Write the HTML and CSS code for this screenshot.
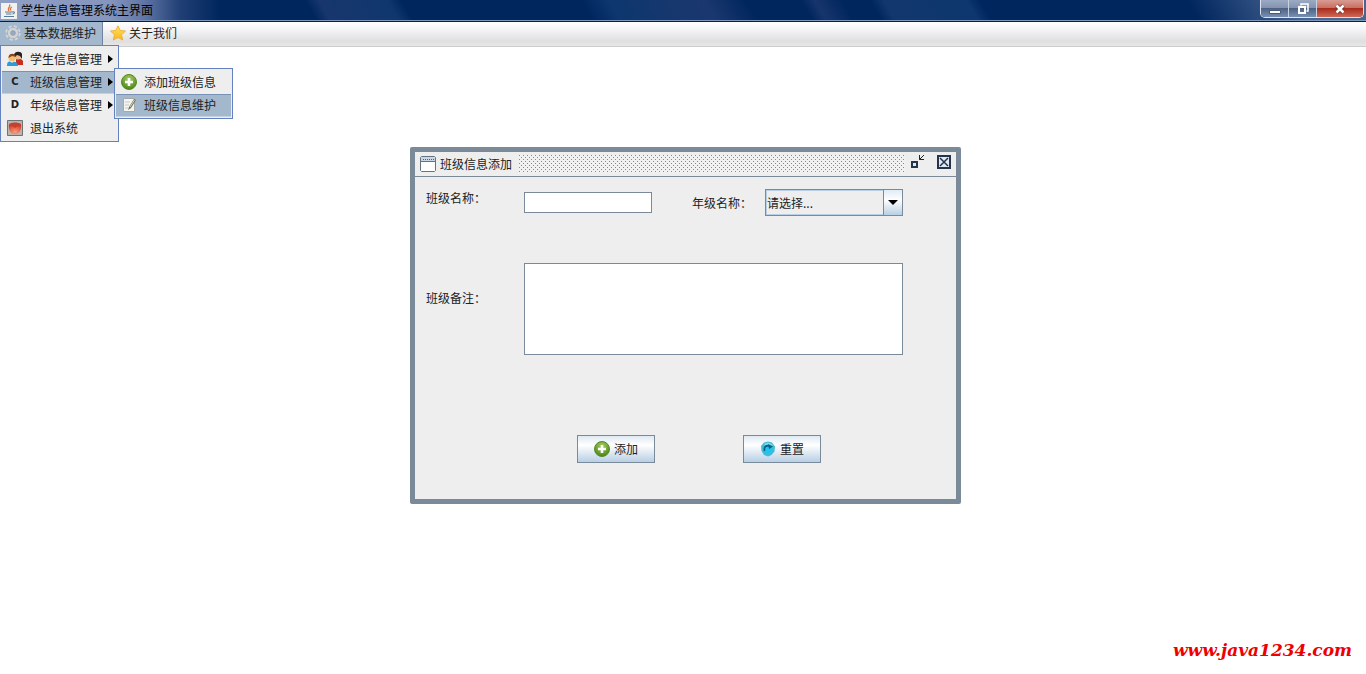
FILE: index.html
```html
<!DOCTYPE html>
<html lang="zh-CN">
<head>
<meta charset="utf-8">
<title>学生信息管理系统主界面</title>
<link rel="stylesheet" href="styles.css">
</head>
<body>
<svg class="defs" aria-hidden="true">
  <defs>
    <radialGradient id="green" cx="50%" cy="30%" r="70%"><stop offset="0" stop-color="#a5ce62"/><stop offset="1" stop-color="#4b8518"/></radialGradient>
    <linearGradient id="star" x1="0" y1="0" x2="0" y2="1"><stop offset="0" stop-color="#ffe65c"/><stop offset="1" stop-color="#f9b51c"/></linearGradient>
    <radialGradient id="red" cx="50%" cy="80%" r="80%"><stop offset="0" stop-color="#ff9a7c"/><stop offset="1" stop-color="#c93a24"/></radialGradient>
    <symbol id="add" viewBox="0 0 16 16"><circle cx="8" cy="8" r="7.5" fill="url(#green)" stroke="#568b25"/><path d="M8 4v8M4 8h8" stroke="#fff" stroke-width="2.6"/></symbol>
  </defs>
</svg>

<header class="titlebar">
  <svg class="java" viewBox="0 0 16 16"><path d="M0 0h16v16H0z" fill="#f3f1ec"/><path d="M8.5 1.5c2 2-3 3.500-.5 6.500M11 4c-2 1-2 2-1 3.500" fill="none" stroke="#e2703a" stroke-width="1.300"/><path d="M4 9h7.500M5 11h5.500M3 13.500h10M11.500 9c3-1 2 2 0 2" fill="none" stroke="#567a9d" stroke-width="1.100"/></svg>
  <h1 class="app-title">学生信息管理系统主界面</h1>
  <div class="controls">
    <button class="control" aria-label="最小化"><svg class="control-icon" viewBox="0 0 14 14"><path d="M1.500 8.500h11v3h-11z" fill="#fff" stroke="#4c5b75"/></svg></button>
    <button class="control" aria-label="还原"><svg class="control-icon" viewBox="0 0 14 14"><path d="M5 3.500V2h7v7h-1.500" fill="none" stroke="#fff" stroke-width="1.500"/><path d="M3 5h6v6H3z" fill="none" stroke="#fff" stroke-width="2"/></svg></button>
    <button class="control control-close" aria-label="关闭"><svg class="control-icon" viewBox="0 0 14 14"><path d="M3.500 3.500l7 7M10.500 3.500l-7 7" stroke="#70211c" stroke-width="4"/><path d="M3.500 3.500l7 7M10.500 3.500l-7 7" stroke="#fff" stroke-width="2.600"/></svg></button>
  </div>
</header>

<nav class="menubar">
  <div class="menu">
    <button class="menu-title menu-open"><svg class="icon" viewBox="0 0 16 16"><circle cx="8" cy="8" r="6.200" fill="none" stroke="#d3d7db" stroke-width="3" stroke-dasharray="2.870 2"/><circle cx="8" cy="8" r="4" fill="none" stroke="#d0d4d8" stroke-width="3"/><circle cx="8" cy="8" r="5.700" fill="none" stroke="#9aa5b0" stroke-width=".6"/><circle cx="8" cy="8" r="2.300" fill="#9bacbf" stroke="#8b98a6" stroke-width=".7"/></svg>基本数据维护</button>
    <ul class="popup">
      <li class="entry"><button class="item"><svg class="icon" viewBox="0 0 16 16"><path d="M9 8h5l2 2v4H9z" fill="#c92c20"/><circle cx="11" cy="5" r="3.600" fill="#eeb989"/><path d="M7 7C5 0 14-1 15 3v5l-2-3-3-1z" fill="#27221f"/><circle cx="5" cy="7" r="3.500" fill="#f4bd74"/><path d="M1.500 7C1 2 8 1 9 6L5 5z" fill="#87471d"/><path d="M0 15c0-5 2-5 5-4 3-1 6 0 6 4z" fill="#2e9bd8"/><path d="M3 10l2 2 2-2" fill="#f9e2c2"/></svg><span class="label">学生信息管理</span><svg class="arrow" viewBox="0 0 5 8"><path d="M0 0l5 4-5 4z"/></svg></button></li>
      <li class="entry"><button class="item selected"><span class="icon letter">C</span><span class="label">班级信息管理</span><svg class="arrow" viewBox="0 0 5 8"><path d="M0 0l5 4-5 4z"/></svg></button>
        <ul class="popup submenu">
          <li class="entry"><button class="item"><svg class="icon"><use href="#add"/></svg><span class="label">添加班级信息</span></button></li>
          <li class="entry"><button class="item selected"><svg class="icon" viewBox="0 0 16 16"><path d="M2.500 1.500h11v13h-11z" fill="#f5f4ef" stroke="#a6a9a9"/><path d="M4 5h5M4 8h4M4 11h3" stroke="#c4c9cc"/><path d="M7 13l1-3 5-8 2 1-5 8z" fill="#6d7165"/><path d="M9 10l4.500-7" stroke="#d7d5b6"/></svg><span class="label">班级信息维护</span></button></li>
        </ul>
      </li>
      <li class="entry"><button class="item"><span class="icon letter">D</span><span class="label">年级信息管理</span><svg class="arrow" viewBox="0 0 5 8"><path d="M0 0l5 4-5 4z"/></svg></button></li>
      <li class="entry"><button class="item"><svg class="icon" viewBox="0 0 16 16"><path d="M.5.5h15v15H.5z" fill="#bbb5ae" stroke="#6f7377"/><path d="M2 4c3 1 9 1 12 0 1 6-2 10-6 10S1 10 2 4z" fill="url(#red)"/><path d="M2 4c3-2 9-2 12 0-1 2-4 2-6 4-2-2-5-2-6-4z" fill="#c4412f"/></svg><span class="label">退出系统</span></button></li>
    </ul>
  </div>
  <button class="menu-title"><svg class="icon" viewBox="0 0 16 16"><path d="M8 .8l2.200 4.700 5.300.6-4 3.600 1.200 5.300L8 12.500 3.300 15l1.200-5.300-4-3.600 5.300-.6z" fill="url(#star)" stroke="#eeb13b" stroke-linejoin="round"/></svg>关于我们</button>
</nav>

<main class="desktop">
  <section class="dialog" aria-labelledby="dialog-title">
    <header class="dialog-bar">
      <svg class="frame-icon" viewBox="0 0 16 16"><path d="M1.500.5h13l1 1v13l-1 1h-13l-1-1v-13z" fill="#fff" stroke="#66727f"/><path d="M1 1h14v4H1z" fill="#c8d6e5"/><path d="M1 5.500h14" stroke="#66727f"/><path d="M3 3.500h11" stroke="#53606d" stroke-dasharray="1 1"/></svg>
      <h2 class="dialog-title" id="dialog-title">班级信息添加</h2>
      <span class="grip"></span>
      <button class="frame-button" aria-label="最小化"><svg class="frame-icon" viewBox="0 0 16 16"><path d="M3 8h5v5H3z" fill="#dce8f3" stroke="#25344d" stroke-width="2"/><path d="M10.500 1v4.500H15M10.500 5.500L15 1" fill="none" stroke="#222"/></svg></button>
      <button class="frame-button" aria-label="关闭"><svg class="frame-icon" viewBox="0 0 16 16"><path d="M2 2h12v12H2z" fill="#e1eaf3" stroke="#25344d" stroke-width="2"/><path d="M4 4l8 8M12 4l-8 8" stroke="#25344d" stroke-width="1.500"/></svg></button>
    </header>
    <form class="form">
      <label class="field-label label-name" for="class-name">班级名称：</label>
      <input class="text-input" id="class-name" type="text">
      <label class="field-label label-grade" for="grade">年级名称：</label>
      <div class="combo"><select class="combo-select" id="grade"><option>请选择...</option></select><span class="combo-button"><svg class="combo-arrow" viewBox="0 0 10 5"><path d="M0 0h10L5 5z"/></svg></span></div>
      <label class="field-label label-remark" for="remark">班级备注：</label>
      <textarea class="remark" id="remark"></textarea>
      <div class="actions">
        <button class="action" type="button"><svg class="icon"><use href="#add"/></svg>添加</button>
        <button class="action" type="reset"><svg class="icon" viewBox="0 0 16 16"><path d="M4 1.500l4-1 4 1 3 4-.5 5-3 3.500L8 15.500 4 14l-2.500-4L1 5z" fill="#42badb"/><path d="M4 3l4-1.500L12 3l1 2-4-1-4 1z" fill="#82d8eb"/><circle cx="8" cy="8.500" r="4" fill="#22c3ed"/><path d="M4.500 10C3.500 6 6 4 9 5" fill="none" stroke="#08647f" stroke-width="1.800"/><path d="M8 3l5 2.500L9 8z" fill="#08647f"/></svg>重置</button>
      </div>
    </form>
  </section>
  <p class="watermark">www.java1234.com</p>
</main>
</body>
</html>
```
FILE: styles.css
```css
* { box-sizing: border-box; }
body {
  display: flex;
  flex-direction: column;
  min-height: 100vh;
  margin: 0;
  background: #fff;
  color: #222;
  font: 12px/16px "Noto Sans CJK SC", sans-serif;
}
button, input, select, textarea { margin: 0; padding: 0; font: inherit; color: inherit; border-radius: 0; }
button { border: 0; background: none; white-space: nowrap; }
h1, h2, p, ul { margin: 0; padding: 0; font: inherit; }
.defs { position: absolute; width: 0; height: 0; }
.icon { flex: none; width: 16px; height: 16px; }

.titlebar {
  display: flex;
  align-items: center;
  height: 22px;
  padding: 0 2px 2px 1px;
  border-bottom: 1px solid #0c1f40;
  box-shadow: inset 0 -1px #7f97bb;
  background:
    linear-gradient(90deg, #8f9fc5 0, #8595bd 110px, #5f75a5 145px, #203f75 180px, transparent 220px),
    linear-gradient(60deg, transparent 23%, #17366d 24%, #0f376e 29%, transparent 30%, transparent 43%, #0d376e 45%, #1b376f 52%, transparent 55%, transparent 59%, #17356c 60%, transparent 62%, transparent 64%, #12376f 65%, #0d376e 71%, transparent 72%, transparent 87%, #496693 95%),
    #00265e;
}
.java { flex: none; width: 16px; height: 16px; margin-top: 2px; }
.app-title { padding-left: 4px; color: #000; }
.controls {
  display: flex;
  align-self: flex-start;
  margin-left: auto;
  border: 1px solid #dbe4f0;
  border-top: 0;
  border-radius: 0 0 5px 5px;
  overflow: hidden;
}
.control {
  display: grid;
  place-items: center;
  width: 28px;
  height: 17px;
  border-right: 1px solid #c7d2e2;
  background: linear-gradient(#9cabc3, #8292af 48%, #4e6284 50%, #7890b2);
}
.control-close { width: 46px; border: 0; background: linear-gradient(#d99b93, #c96d60 48%, #a92d1c 50%, #ce6855); }
.control-icon { width: 14px; height: 14px; }

.menubar {
  display: flex;
  height: 25px;
  border-bottom: 1px solid #ccc;
  background: linear-gradient(#fff, #f5f5f8 30%, #dfdfdf 80%, #e8e8e8);
}
.menu { position: relative; }
.menu-title { display: flex; align-items: center; gap: 3px; height: 23px; padding: 0 7px 1px; }
.menu-open { padding: 0 6px 1px 5px; border-right: 1px solid #7083a0; background: #a3b8cc; }
.popup {
  position: absolute;
  z-index: 2;
  top: 23px;
  left: 0;
  width: 119px;
  padding: 2px 1px 1px;
  border: 1px solid #6382bf;
  background: #eee;
  list-style: none;
}
.submenu { top: -3px; left: 112px; }
.entry { position: relative; }
.item {
  display: flex;
  align-items: center;
  width: 100%;
  height: 23px;
  padding: 0 4px 1px 5px;
}
.selected { background: #a3b8cc; box-shadow: inset 0 1px #7891b5, inset 0 -1px #c3d1df; }
.label { padding-left: 7px; }
.arrow { width: 5px; height: 8px; margin-left: auto; }
.letter { font: bold 10px/16px "DejaVu Sans", sans-serif; text-align: center; }

.desktop { position: relative; flex: 1; }
.dialog {
  position: absolute;
  top: 100px;
  left: 410px;
  width: 551px;
  border: 5px solid #7a8a99;
  border-radius: 2px;
  background: #eee;
}
.dialog-bar {
  display: flex;
  align-items: center;
  height: 25px;
  padding: 0 4px 0 5px;
  border-bottom: 1px solid #7a8a99;
}
.frame-icon { display: block; flex: none; width: 16px; height: 16px; }
.dialog-title { padding: 0 7px 0 4px; }
.grip {
  flex: 1;
  height: 18px;
  margin-right: 4px;
  background:
    conic-gradient(from 270deg at 1px 1px, #888 25%, transparent 0) 0 0 / 4px 4px,
    conic-gradient(from 270deg at 1px 1px, #888 25%, transparent 0) 2px 2px / 4px 4px,
    #f1f1f1;
}
.frame-button + .frame-button { margin-left: 11px; }
.frame-button { margin-bottom: 4px; }

.form {
  display: grid;
  grid-template-columns: 98px 128px 1fr 138px;
  row-gap: 47px;
  align-items: center;
  padding: 12px 53px 36px 11px;
}
.label-name { align-self: start; padding-top: 1px; }
.label-grade { padding-left: 40px; }
.label-remark { padding-bottom: 22px; }
.text-input { width: 100%; height: 21px; padding: 0 3px; border: 1px solid #7a8a99; background: #fff; }
.combo { position: relative; height: 27px; }
.combo-select {
  appearance: none;
  width: 100%;
  height: 100%;
  padding: 0 22px 0 1px;
  border: 1px solid #7a8a99;
  box-shadow: inset 0 0 0 1px #b8cfe5;
  background: #eee;
}
.combo-button {
  position: absolute;
  inset: 1px 1px 1px auto;
  display: grid;
  place-items: center;
  width: 19px;
  border-left: 1px solid #7a8a99;
  background: linear-gradient(#e0ebf5, #fff 40%, #b8cfe5);
  pointer-events: none;
}
.combo-arrow { width: 10px; height: 5px; }
.remark { grid-column: 2 / -1; display: block; height: 92px; padding: 2px; border: 1px solid #7a8a99; background: #fff; resize: none; }
.actions { grid-column: 1 / -1; display: flex; justify-content: center; gap: 88px; padding: 33px 0 0 69px; }
.action {
  display: flex;
  align-items: center;
  justify-content: center;
  gap: 4px;
  width: 78px;
  height: 28px;
  border: 1px solid #7a8a99;
  background: linear-gradient(#dfe9f3, #fff 35%, #b8cfe5);
}
.watermark {
  position: absolute;
  right: 14px;
  bottom: 12px;
  color: #e00;
  font: italic bold 17px/24px "DejaVu Serif", serif;
}
```
